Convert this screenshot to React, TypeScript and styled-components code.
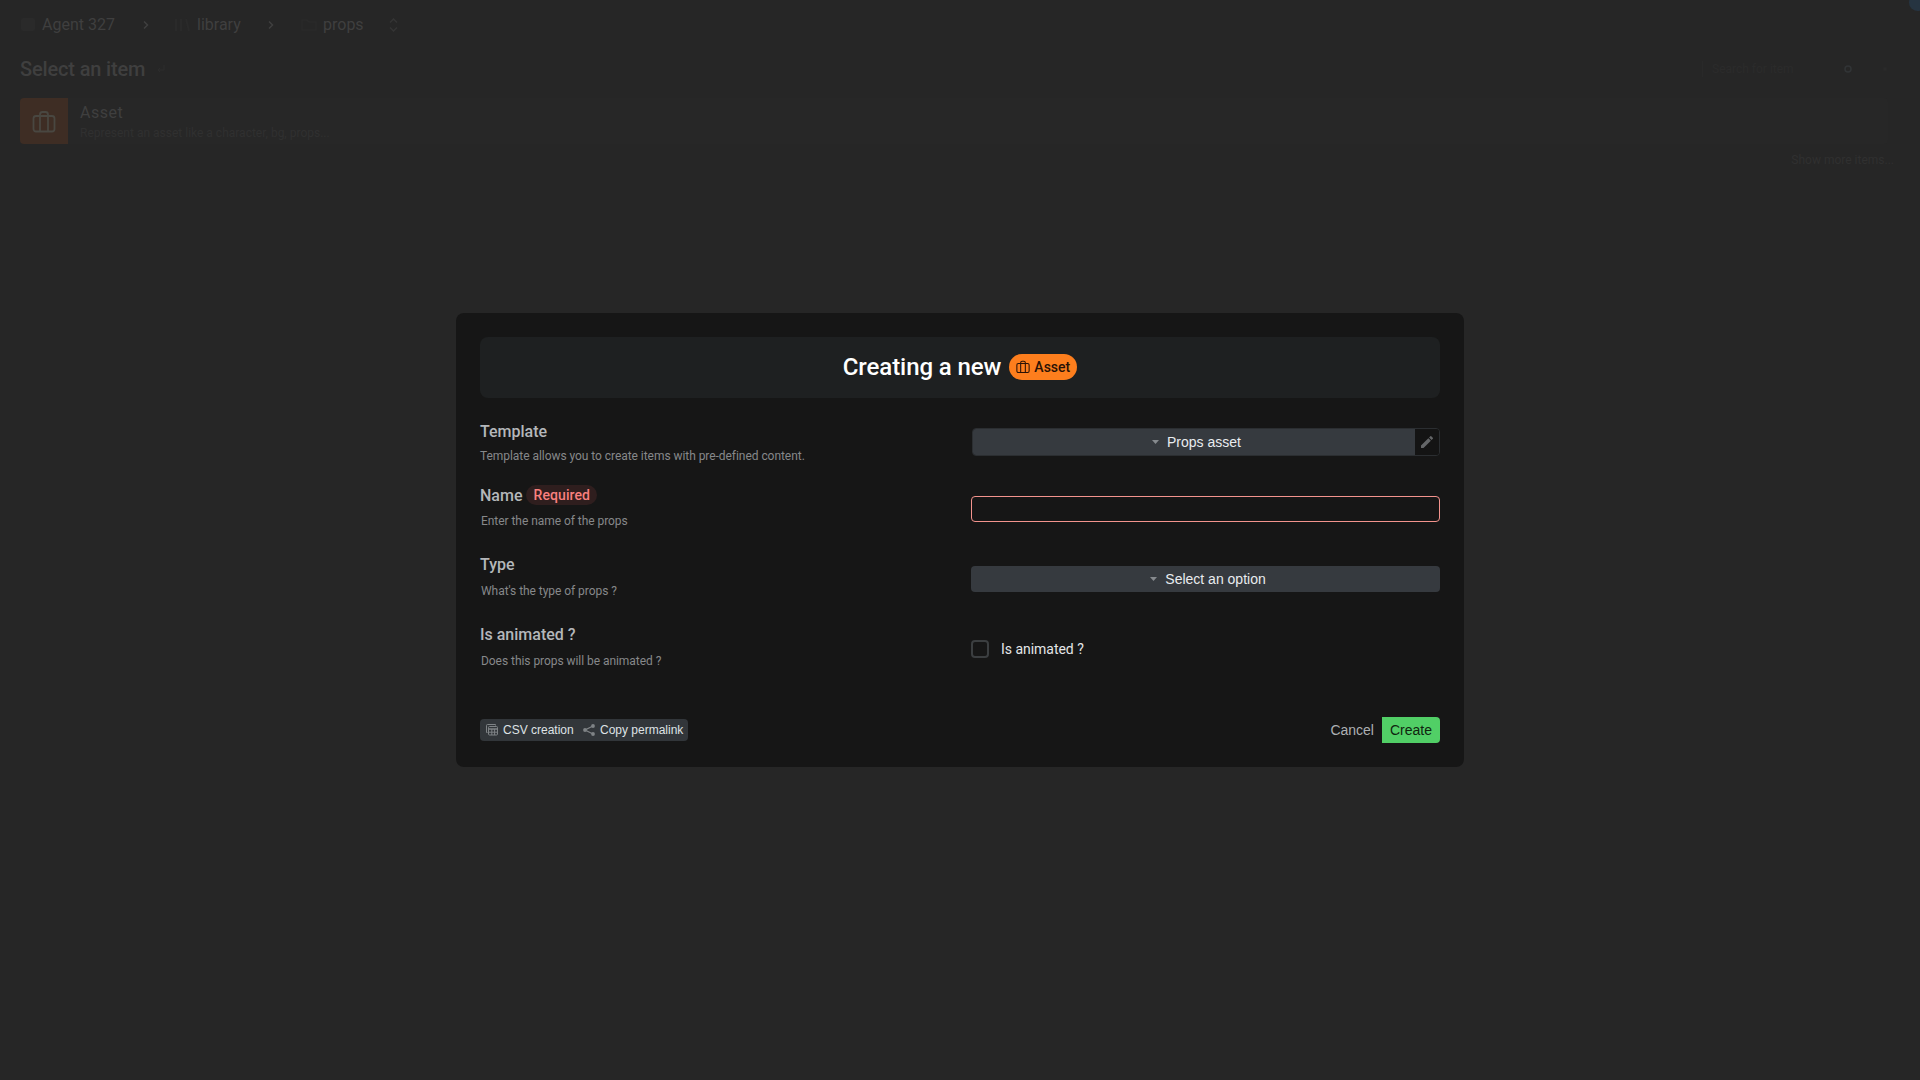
import React from 'react';
import styled, { createGlobalStyle } from 'styled-components';

const Global = createGlobalStyle`
  * { box-sizing: border-box; }
  html, body { margin: 0; background: #262626; overflow: hidden; }
  button, input { font: inherit; margin: 0; }
`;

const arial = '"Liberation Sans", Arial, sans-serif';

const Page = styled.div`
  position: relative;
  width: 1920px;
  height: 1080px;
  overflow: hidden;
  background: #262626;
  color: #3f3f3f;
  font-family: Roboto, sans-serif;
`;
const Breadcrumb = styled.nav`
  display: flex;
  align-items: center;
  height: 49px;
  padding-left: 20px;
  font-size: 16px;
`;
const Crumb = styled.span<{ $w: number }>`
  display: flex;
  align-items: center;
  gap: 6px;
  width: ${(p) => p.$w}px;
  svg { color: #2a2a2a; }
`;
const Separator = styled.span<{ $w: number }>`
  display: flex;
  width: ${(p) => p.$w}px;
`;
const TitleBar = styled.div`
  display: flex;
  align-items: center;
  height: 39px;
  padding: 0 28px 0 20px;
`;
const PageTitle = styled.h1`
  margin: 0 12px 0 0;
  font-size: 20px;
  font-weight: 500;
  letter-spacing: -0.15px;
`;
const Tools = styled.div`
  display: flex;
  align-items: center;
  margin-left: auto;
`;
const SearchField = styled.div`
  width: 142px;
  height: 16px;
  padding-left: 9px;
  border-left: 1px solid #292929;
  color: #2b2b2b;
  font-size: 12px;
  line-height: 16px;
`;
const ToolIcon = styled.span<{ $gap: number }>`
  display: flex;
  margin-right: ${(p) => p.$gap}px;
`;
const ItemCard = styled.div`
  display: flex;
  height: 46px;
  margin: 10px 32px 0 20px;
  border-radius: 4px;
  overflow: hidden;
  background: #272727;
`;
const ItemThumb = styled.div`
  display: grid;
  place-items: center;
  width: 48px;
  padding-top: 2px;
  background: #3e2d24;
  color: #494741;
`;
const ItemText = styled.div`
  padding: 4px 12px;
`;
const ItemName = styled.div`
  font-size: 16px;
  line-height: 21px;
  letter-spacing: 0.5px;
`;
const ItemNote = styled.div`
  color: #303030;
  font-size: 12px;
  line-height: 20px;
`;
const ShowMore = styled.div`
  margin: 8px 26px 0 0;
  text-align: right;
  color: #303030;
  font-size: 12px;
  line-height: 16px;
`;
const Presence = styled.span`
  position: absolute;
  right: -6px;
  top: -6px;
  width: 17px;
  height: 17px;
  border-radius: 50%;
  background: #263441;
`;

const Overlay = styled.div`
  position: absolute;
  inset: 0;
  display: grid;
  place-items: center;
`;
const Dialog = styled.section`
  display: flex;
  flex-direction: column;
  width: 1008px;
  height: 454px;
  padding: 24px;
  border-radius: 8px;
  background: #161616;
`;
const DialogHeader = styled.header`
  display: flex;
  align-items: center;
  justify-content: center;
  gap: 8px;
  height: 61px;
  padding-bottom: 2px;
  border-radius: 8px;
  background: #1e2021;
`;
const DialogTitle = styled.h2`
  margin: 0;
  color: #fff;
  font-size: 24px;
  font-weight: 500;
  line-height: 28px;
  letter-spacing: -0.08px;
`;
const TypeBadge = styled.span`
  display: flex;
  align-items: center;
  gap: 4px;
  height: 26px;
  padding: 0 7px;
  border-radius: 13px;
  background: #fd7e1d;
  color: #2a1206;
  font-size: 14px;
  font-weight: 500;
`;
const Field = styled.div<{ $h: number; $top: number }>`
  display: grid;
  grid-template-columns: 491px 469px;
  height: ${(p) => p.$h}px;
  padding-top: ${(p) => p.$top}px;
`;
const Label = styled.div<{ $lift?: boolean }>`
  display: flex;
  align-items: center;
  gap: 4px;
  height: 20px;
  padding-bottom: ${(p) => (p.$lift ? 2 : 0)}px;
  color: #b4b7ba;
  font-size: 16px;
  font-weight: 500;
`;
const Required = styled.span`
  display: flex;
  align-items: center;
  height: 20px;
  padding: 0 7px;
  border-radius: 10px;
  background: #2f1e1e;
  color: #f9807e;
  font-size: 14px;
  letter-spacing: 0.1px;
`;
const Hint = styled.div<{ $top: number; $indent?: number }>`
  margin-top: ${(p) => p.$top}px;
  padding-left: ${(p) => p.$indent ?? 0}px;
  color: #86888a;
  font-size: 12px;
  line-height: 16px;
  letter-spacing: -0.05px;
`;
const Control = styled.div<{ $top: number }>`
  padding-top: ${(p) => p.$top}px;
`;
const SelectGroup = styled.div`
  display: flex;
  height: 28px;
  margin-left: 1px;
  border: 1px solid #2b2e31;
  border-radius: 4px;
  overflow: hidden;
`;
const SelectButton = styled.button<{ $grouped?: boolean }>`
  display: flex;
  align-items: center;
  justify-content: center;
  gap: 8px;
  width: 100%;
  height: 26px;
  padding: 0 0 0 5px;
  border: 0;
  border-radius: ${(p) => (p.$grouped ? 0 : 4)}px;
  background: #363a3f;
  color: #e9ecef;
  font-family: ${arial};
  font-size: 14px;
  svg { color: #868a8e; }
`;
const EditButton = styled.button`
  display: grid;
  place-items: center;
  flex: 0 0 24px;
  padding: 0;
  border: 0;
  background: #141414;
  color: #646668;
`;
const NameInput = styled.input`
  display: block;
  width: 100%;
  height: 26px;
  border: 1px solid #f3938d;
  border-radius: 4px;
  background: #161616;
  color: #fff;
  outline: 0;
`;
const CheckLabel = styled.label`
  display: flex;
  align-items: center;
  gap: 12px;
  height: 18px;
  color: #e4e6e8;
  font-size: 14px;
  letter-spacing: -0.03px;
`;
const CheckBox = styled.span`
  width: 18px;
  height: 18px;
  border: 2px solid #3b3e40;
  border-radius: 4px;
`;
const Footer = styled.footer`
  display: flex;
  align-items: center;
  justify-content: space-between;
  height: 26px;
  margin-top: auto;
`;
const ActionGroup = styled.div`
  display: flex;
  height: 22px;
  border-radius: 4px;
  overflow: hidden;
  background: #32363a;
`;
const SmallButton = styled.button<{ $w: number; $gap: number }>`
  display: flex;
  align-items: center;
  gap: ${(p) => p.$gap}px;
  width: ${(p) => p.$w}px;
  padding: 0 0 0 6px;
  border: 0;
  background: transparent;
  color: #dfe2e5;
  font-family: ${arial};
  font-size: 12px;
  white-space: nowrap;
  svg { color: #7f8386; }
`;
const Confirm = styled.div`
  display: flex;
  height: 26px;
`;
const TextButton = styled.button<{ $primary?: boolean }>`
  padding: 0 8px;
  border: 0;
  border-radius: ${(p) => (p.$primary ? '0 4px 4px 0' : '0')};
  background: ${(p) => (p.$primary ? '#51cf66' : 'transparent')};
  color: ${(p) => (p.$primary ? '#10250f' : '#adb0b3')};
  font-family: ${arial};
  font-size: 14px;
`;

const Luggage = ({ size }: { size: number }) => (
  <svg width={size} height={size} viewBox="0 0 24 24" fill="none" stroke="currentColor" strokeWidth="1.800">
    <rect x="1.500" y="6" width="21" height="15.500" rx="2.500" />
    <path d="M8 21.500V4.500A2.500 2.500 0 0 1 10.500 2h3A2.500 2.500 0 0 1 16 4.500v17" />
  </svg>
);
const Caret = () => (
  <svg width="7" height="4" viewBox="0 0 7 4" fill="currentColor"><path d="M0 0h7L3.500 4z" /></svg>
);
const Chevron = () => (
  <svg width="6" height="8" viewBox="0 0 6 8" fill="none" stroke="currentColor" strokeWidth="1.500"><path d="M1 .5 4.500 4 1 7.500" /></svg>
);
const Pencil = () => (
  <svg width="16" height="16" viewBox="0 0 24 24" fill="currentColor"><path d="M3 17.250V21h3.750L17.810 9.940l-3.750-3.750L3 17.250zM20.710 7.040a1 1 0 0 0 0-1.410l-2.340-2.340a1 1 0 0 0-1.410 0l-1.830 1.830 3.750 3.750 1.830-1.830z" /></svg>
);
const TableStack = () => (
  <svg width="12" height="12" viewBox="0 0 12 12" fill="none" stroke="currentColor">
    <path d="M1.500 8.500h-1V1.500a1 1 0 0 1 1-1h8v1" />
    <rect x="2.500" y="2.500" width="9" height="8.500" rx="1" />
    <path d="M3 5h8.500" strokeWidth="1.500" />
    <path d="M3 8.200h8.500M5.800 5v6M8.600 5v6" />
  </svg>
);
const Share = () => (
  <svg width="12" height="12" viewBox="0 0 12 12" fill="currentColor">
    <path d="M10 2 2 6l8 4" fill="none" stroke="currentColor" strokeWidth="1.300" />
    <circle cx="10" cy="2" r="1.900" /><circle cx="2" cy="6" r="1.900" /><circle cx="10" cy="10" r="1.900" />
  </svg>
);

export default function App() {
  return (
    <Page>
      <Global />
      <Breadcrumb>
        <Crumb $w={123}>
          <svg width="16" height="14" fill="currentColor"><rect x="1" width="14" height="13" rx="2" /></svg>Agent 327
        </Crumb>
        <Separator $w={32}><Chevron /></Separator>
        <Crumb $w={93}>
          <svg width="16" height="14" fill="none" stroke="currentColor" strokeWidth="2"><path d="M1 1v12M6 1v12M11 1l3 12" /></svg>library
        </Crumb>
        <Separator $w={33}><Chevron /></Separator>
        <Crumb $w={88}>
          <svg width="16" height="14" fill="none" stroke="currentColor" strokeWidth="1.500"><path d="M1 12V2h5l2 2h7v8z" /></svg>props
        </Crumb>
        <svg width="9" height="14" viewBox="0 0 9 14" fill="none" stroke="#343434" strokeWidth="1.500"><path d="M1 4.500 4.500 1 8 4.500M1 9.500 4.500 13 8 9.500" /></svg>
      </Breadcrumb>
      <TitleBar>
        <PageTitle>Select an item</PageTitle>
        <svg width="8" height="10" viewBox="0 0 8 10" fill="none" stroke="#2c2c2c"><path d="M7 1v5H1m2-2L1 6l2 2" /></svg>
        <Tools>
          <SearchField>Search for item</SearchField>
          <ToolIcon $gap={30}>
            <svg width="8" height="8" fill="none" stroke="#313436" strokeWidth="1.500"><circle cx="4" cy="4" r="3" /></svg>
          </ToolIcon>
          <ToolIcon $gap={4}>
            <svg width="6" height="6" fill="#2a2a2a"><circle cx="3" cy="3" r="2" /></svg>
          </ToolIcon>
        </Tools>
      </TitleBar>
      <ItemCard>
        <ItemThumb><Luggage size={24} /></ItemThumb>
        <ItemText>
          <ItemName>Asset</ItemName>
          <ItemNote>Represent an asset like a character, bg, props...</ItemNote>
        </ItemText>
      </ItemCard>
      <ShowMore>Show more items...</ShowMore>
      <Presence />

      <Overlay>
        <Dialog>
          <DialogHeader>
            <DialogTitle>Creating a new</DialogTitle>
            <TypeBadge><Luggage size={14} />Asset</TypeBadge>
          </DialogHeader>
          <Field $h={77} $top={23}>
            <div>
              <Label>Template</Label>
              <Hint $top={7}>Template allows you to create items with pre-defined content.</Hint>
            </div>
            <Control $top={7}>
              <SelectGroup>
                <SelectButton $grouped><Caret />Props asset</SelectButton>
                <EditButton><Pencil /></EditButton>
              </SelectGroup>
            </Control>
          </Field>
          <Field $h={70} $top={10}>
            <div>
              <Label>Name<Required>Required</Required></Label>
              <Hint $top={8} $indent={1}>Enter the name of the props</Hint>
            </div>
            <Control $top={11}><NameInput /></Control>
          </Field>
          <Field $h={70} $top={10}>
            <div>
              <Label $lift>Type</Label>
              <Hint $top={8} $indent={1}>What's the type of props ?</Hint>
            </div>
            <Control $top={11}><SelectButton><Caret />Select an option</SelectButton></Control>
          </Field>
          <Field $h={70} $top={10}>
            <div>
              <Label $lift>Is animated ?</Label>
              <Hint $top={8} $indent={1}>Does this props will be animated ?</Hint>
            </div>
            <Control $top={15}><CheckLabel><CheckBox />Is animated ?</CheckLabel></Control>
          </Field>
          <Footer>
            <ActionGroup>
              <SmallButton $w={97} $gap={5}><TableStack />CSV creation</SmallButton>
              <SmallButton $w={111} $gap={5}><Share />Copy permalink</SmallButton>
            </ActionGroup>
            <Confirm>
              <TextButton>Cancel</TextButton>
              <TextButton $primary>Create</TextButton>
            </Confirm>
          </Footer>
        </Dialog>
      </Overlay>
    </Page>
  );
}
